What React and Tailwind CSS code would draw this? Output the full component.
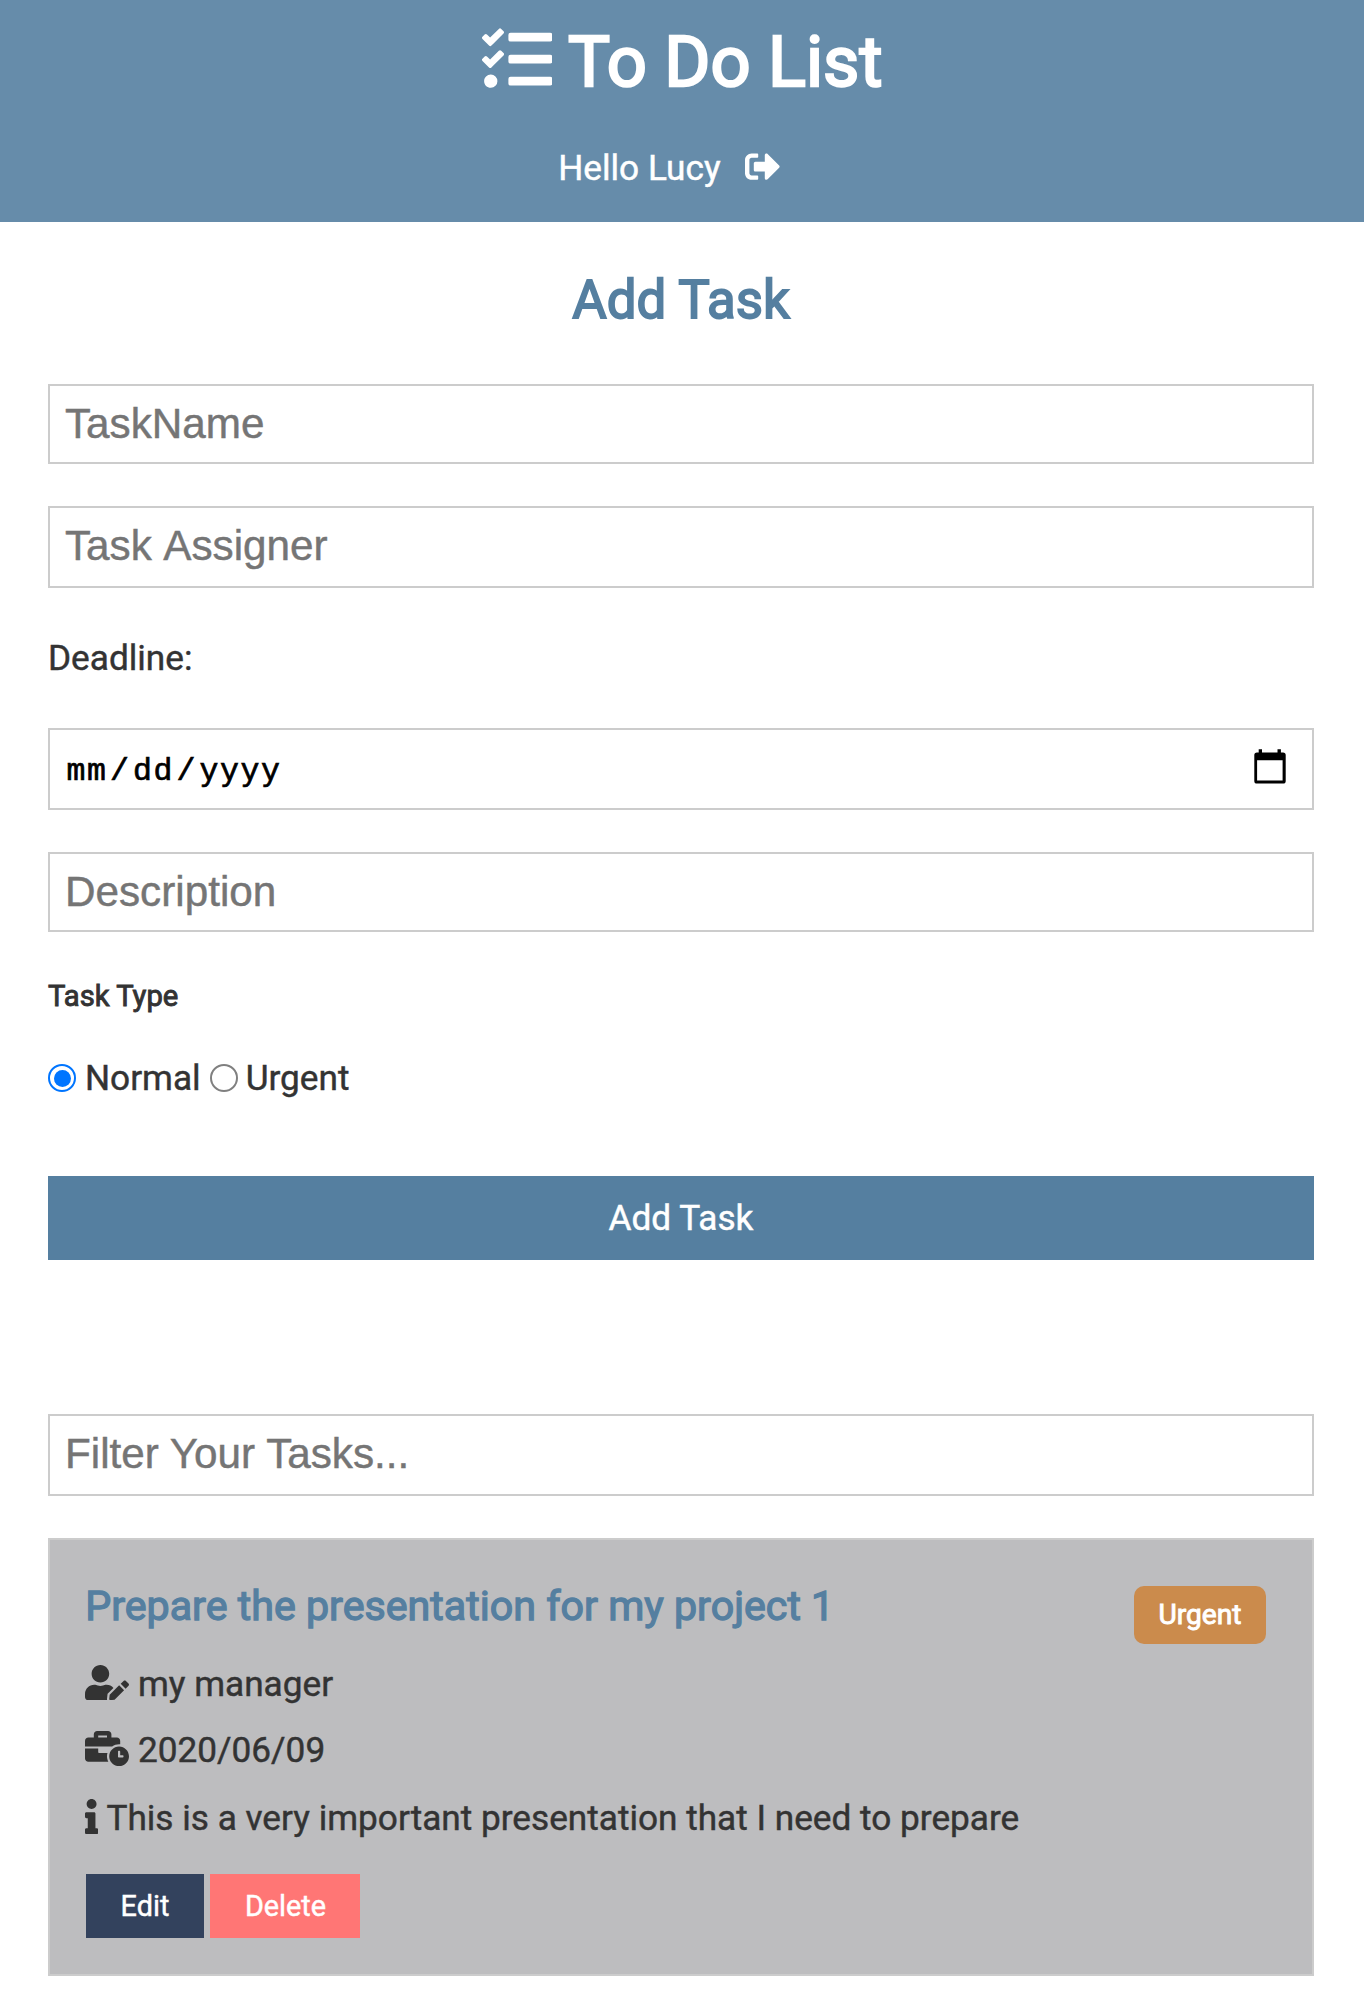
import React from "react";
import { FaTasks, FaSignOutAlt, FaUserEdit, FaBusinessTime, FaInfo } from "react-icons/fa";

const field =
  "block w-full border-2 border-[#ccc] bg-white px-[15px] leading-[76px] outline-none font-['Liberation_Sans',Arial,sans-serif] text-[42.24px] text-black placeholder:text-[#757575] placeholder:opacity-100";

function CalendarIcon() {
  return (
    <svg className="-mt-1" width="32" height="36" viewBox="0 0 32 36" aria-hidden="true">
      <path
        fillRule="evenodd"
        fill="#000"
        d="M4.7 0.3H8V3.4H23.5V0.3H26.9V3.4H29Q31.7 3.4 31.7 6V32Q31.7 34.6 29 34.6H3Q0.3 34.6 0.3 32V6Q0.3 3.4 3 3.4H4.7ZM3.1 11.2V31.6H28.6V11.2Z"
      />
    </svg>
  );
}

function Radio({ checked }) {
  return checked ? (
    <span className="flex size-7 items-center justify-center rounded-full border-2 border-[#0075ff] bg-white">
      <span className="size-[17px] rounded-full bg-[#0075ff]" />
    </span>
  ) : (
    <span className="size-7 rounded-full border-2 border-[#808080] bg-white" />
  );
}

export default function App() {
  return (
    <div className="min-h-[1996px] bg-white font-['Roboto',sans-serif] text-[35.2px] text-[#333] [-webkit-text-stroke:0.45px_currentColor]">
      <header className="h-[222px] bg-[#668caa] text-center text-white">
        <h1 className="h-[124px] text-[70.4px] leading-[124px] [-webkit-text-stroke:2.4px_currentColor]">
          <FaTasks className="inline align-[-0.125em]" /> To Do List
        </h1>
        <p className="h-[88px] pr-[26px] leading-[88px]">
          Hello Lucy
          <FaSignOutAlt className="ml-[24px] inline align-[-0.125em]" />
        </p>
      </header>

      <main className="mx-auto w-[1266px] -translate-x-px">
        <form>
          <h2 className="h-[162px] pb-[5px] text-center text-[52.8px] leading-[157px] text-[#557fa0] [-webkit-text-stroke:1.8px_currentColor]">
            Add Task
          </h2>
          <input className={`${field} h-20`} placeholder="TaskName" />
          <input className={`${field} mt-[42px] h-[82px] pb-[2px] [word-spacing:2px]`} placeholder="Task Assigner" />
          <p className="h-[140px] leading-[140px]">Deadline:</p>
          <div className="flex h-[82px] items-center justify-between border-2 border-[#ccc] pl-[16.5px] pr-[26px] font-['Liberation_Mono','Courier_New',monospace] text-[31.5px] text-black">
            <span className="flex pt-[6px] tracking-[1.6px] [-webkit-text-stroke:0.7px_currentColor]">
              <span>mm</span>
              <span className="px-[2.5px]">/</span>
              <span>dd</span>
              <span className="px-[2.5px]">/</span>
              <span>yyyy</span>
            </span>
            <CalendarIcon />
          </div>
          <input className={`${field} mt-[42px] h-20`} placeholder="Description" />
          <h5 className="h-32 text-[29.2px] leading-[128px] [-webkit-text-stroke:0.9px_currentColor]">Task Type</h5>
          <div className="flex h-9 items-center leading-9">
            <Radio checked />
            <span className="ml-[9px] mr-[9px]">Normal</span>
            <Radio />
            <span className="ml-[8px]">Urgent</span>
          </div>
          <button type="button" className="mt-20 block h-[84px] w-full bg-[#557fa0] leading-[84px] text-white">
            Add Task
          </button>
        </form>

        <input className={`${field} mt-[154px] h-[82px] pb-[2px]`} placeholder="Filter Your Tasks..." />

        <section className="mt-[42px] h-[438px] border-2 border-[#ccc] bg-[#bdbdbf] pl-[35.2px] pr-[46px] pt-[42px]">
          <div className="flex h-12 items-start justify-between">
            <h3 className="text-[41.2px] leading-[48px] text-[#557fa0] [-webkit-text-stroke:1.3px_currentColor]">
              Prepare the presentation for my project 1
            </h3>
            <span className="mt-1 h-[58px] w-[132px] rounded-[10px] bg-[#cb8b4c] text-center text-[28.16px] leading-[58px] text-white [-webkit-text-stroke:0.9px_currentColor]">
              Urgent
            </span>
          </div>
          <ul className="mt-[21px]">
            <li className="h-[66px] leading-[66px]">
              <FaUserEdit className="inline h-[35.2px] w-[44px] align-[-0.125em]" /> my manager
            </li>
            <li className="h-[66px] leading-[66px]">
              <FaBusinessTime className="inline h-[35.2px] w-[44px] align-[-0.125em]" /> 2020/06/09
            </li>
            <li className="h-[70px] leading-[70px]">
              <FaInfo className="inline h-[35.2px] w-[13.2px] align-[-0.125em]" /> This is a very important presentation that I need to
              prepare
            </li>
          </ul>
          <div className="mt-[21px] flex gap-[6px] pl-[0.8px] text-[28.8px] leading-[64px] text-white">
            <button type="button" className="h-16 w-[118px] bg-[#33425d]">Edit</button>
            <button type="button" className="h-16 w-[150px] bg-[#ff7675] pl-px">Delete</button>
          </div>
        </section>
      </main>
    </div>
  );
}
